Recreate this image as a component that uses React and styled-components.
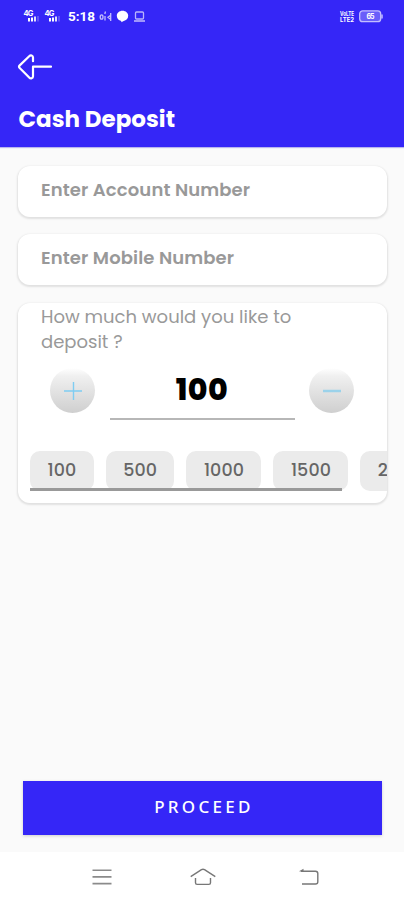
import React, { useState } from 'react'
import styled, { createGlobalStyle } from 'styled-components'

const amounts = [100, 500, 1000, 1500, 2000]

const SignalIcon = () => (
    <svg width="18" height="14" viewBox="0 0 18 14" fill="#fff">
        <text x="0.5" y="6.5" fontFamily="Inter, sans-serif" fontSize="7.5" fontWeight="700" textLength="10">4G</text>
        <rect x="5" y="9" width="2" height="3.5" />
        <rect x="8" y="8.5" width="2" height="4" />
        <rect x="11" y="7.5" width="2" height="5" opacity="0.85" />
        <rect x="14" y="7" width="2" height="5.5" opacity="0.2" />
    </svg>
)

const StatusIcons = () => (
    <svg width="48" height="14" viewBox="0 0 48 14" fill="none" stroke="#fff">
        <g strokeWidth="1.3" opacity="0.7">
            <ellipse cx="2.6" cy="8" rx="1.4" ry="2.2" />
            <path d="M6.500 2.500L5.800 5M6 7v4.500M11.700 4v8M11.700 6.300L9 8.300l2.700 2.200" />
        </g>
        <path d="M23.500 1.800c3.200 0 5.700 2.200 5.700 5s-2 4.800-4.500 5.100l-2.400 1.300v-1.300c-2.700-.5-4.500-2.400-4.500-5.100C17.800 4 20.300 1.800 23.500 1.800z" fill="#fff" stroke="none" />
        <g strokeWidth="1.3" opacity="0.65">
            <rect x="36.500" y="3" width="8" height="7" rx="1" />
            <path d="M35 12h11" strokeWidth="1.600" />
        </g>
    </svg>
)

const BatteryIcons = () => (
    <svg width="46" height="14" viewBox="0 0 46 14" fill="none" fontFamily="Inter, sans-serif" fontWeight="700">
        <text x="2" y="6.600" fill="#fff" fontSize="6" textLength="14" lengthAdjust="spacingAndGlyphs">VoLTE</text>
        <text x="2" y="12.500" fill="#fff" fontSize="6" textLength="14" lengthAdjust="spacingAndGlyphs">LTE2</text>
        <rect x="21.700" y="1.900" width="21" height="10.800" rx="3" fill="#6a5efa" stroke="#c3beff" strokeWidth="1.300" />
        <path d="M44 5.500v4" stroke="#c3beff" strokeWidth="1.500" />
        <text x="28.500" y="9.800" fill="#fff" fontSize="7" textLength="8">65</text>
    </svg>
)

const BackIcon = () => (
    <svg width="36" height="28" viewBox="0 0 36 28" fill="none" stroke="#fff" strokeWidth="2.200" strokeLinecap="round" strokeLinejoin="round">
        <path d="M34 13.700H16v9.500c0 2.200-2.300 2.900-3.800 1.300L2.700 15c-.9-.9-.9-1.700 0-2.600l9.500-9.200c1.500-1.500 3.800-.8 3.800 1.400v3.600" />
    </svg>
)

const App = () => {
    const [amount, setAmount] = useState(100)
    return (
        <>
            <GlobalStyle />
            <Screen>
                <Header>
                    <StatusBar>
                        <StatusLeft>
                            <SignalIcon />
                            <SignalIcon />
                            <Clock>5:18</Clock>
                            <StatusIcons />
                        </StatusLeft>
                        <BatteryIcons />
                    </StatusBar>
                    <BackButton aria-label="Back">
                        <BackIcon />
                    </BackButton>
                    <Title>Cash Deposit</Title>
                </Header>
                <Content>
                    <Field><span>Enter Account Number</span></Field>
                    <Field><span>Enter Mobile Number</span></Field>
                    <AmountCard>
                        <Question>How much would you like to<br />deposit ?</Question>
                        <Stepper>
                            <RoundButton aria-label="Increase" onClick={() => setAmount(amount + 100)}>
                                <svg width="20" height="20" viewBox="0 0 20 20" stroke="#7fcdf2" strokeWidth="1.400">
                                    <path d="M1 10h18M10.500 1v18" />
                                </svg>
                            </RoundButton>
                            <Amount>{amount}</Amount>
                            <RoundButton aria-label="Decrease" onClick={() => setAmount(Math.max(0, amount - 100))}>
                                <svg width="20" height="20" viewBox="0 0 20 20" stroke="#9bd2ea" strokeWidth="2.400">
                                    <path d="M1 10h18" />
                                </svg>
                            </RoundButton>
                        </Stepper>
                        <ChipRow>
                            {amounts.map(value => (
                                <Chip key={value} onClick={() => setAmount(value)}>{value}</Chip>
                            ))}
                        </ChipRow>
                        <ScrollTrack />
                    </AmountCard>
                </Content>
                <Proceed>PROCEED</Proceed>
                <NavBar>
                    <svg width="20" height="18" viewBox="0 0 20 18" stroke="#8b8b8b" strokeWidth="1.600">
                        <path d="M.5 2.200h19M.5 8.900h19M.5 15.600h19" />
                    </svg>
                    <svg width="26" height="18" viewBox="0 0 26 18" fill="none" stroke="#777" strokeWidth="1.400">
                        <path d="M.7 8.600L11.500 1.700q1.500-.9 3 0L25.300 8.600M5.500 10v4.800q0 1.600 1.600 1.600h11.800q1.600 0 1.600-1.600V10" />
                    </svg>
                    <svg width="20" height="18" viewBox="0 0 20 18" fill="none" stroke="#777" strokeWidth="1.400">
                        <path d="M2 3.200h14.500q2.300 0 2.300 2.300v8.200q0 2.300-2.300 2.300H3" />
                        <path d="M0 3.200L4.500.800V4z" fill="#777" stroke="none" />
                    </svg>
                </NavBar>
            </Screen>
        </>
    )
}

const GlobalStyle = createGlobalStyle`
    * {
        box-sizing: border-box;
    }
    body {
        margin: 0;
        background: #fafafa;
        font-family: Poppins, Inter, sans-serif;
    }
    button {
        font-family: inherit;
        border: none;
        padding: 0;
    }
    svg {
        display: block;
        flex-shrink: 0;
    }
`

const Screen = styled.div`
    display: flex;
    flex-direction: column;
    width: 404px;
    height: 900px;
    overflow: hidden;
    background: #fafafa;
`

const Header = styled.header`
    height: 147px;
    flex-shrink: 0;
    background: #3526f7;
    color: #fff;
    box-shadow: 0 1px 1px #b9b5ee;
`

const StatusBar = styled.div`
    display: flex;
    justify-content: space-between;
    height: 32px;
    padding: 9px 20px 0 23px;
`

const StatusLeft = styled.div`
    display: flex;
    gap: 3px;
`

const Clock = styled.span`
    width: 28px;
    margin: 0 0 0 3px;
    font: 700 13.5px/15px Roboto, sans-serif;
`

const BackButton = styled.button`
    display: block;
    margin: 21px 0 0 17px;
    background: none;
`

const Title = styled.h1`
    margin: 22px 0 0 18.5px;
    font-size: 23px;
    line-height: 32px;
    font-weight: 700;
    white-space: nowrap;
`

const Content = styled.main`
    display: flex;
    flex-direction: column;
    flex: 1;
    gap: 17px;
    padding: 19px 17px 0 18px;
`

const Card = styled.div`
    background: #fff;
    border-radius: 12px;
    box-shadow: 0 1px 2px 1px rgba(0, 0, 0, 0.1);
`

const Field = styled(Card)`
    height: 51px;
    padding: 11px 23px;
    color: #999;
    font-size: 18px;
    line-height: 25px;
    font-weight: 600;
    letter-spacing: 0.12px;
    white-space: nowrap;
`

const AmountCard = styled(Card)`
    height: 200px;
    margin-top: 1px;
    overflow: hidden;
`

const Question = styled.p`
    margin: 0;
    padding: 1px 0 0 23px;
    color: #999;
    font-size: 18px;
    line-height: 25px;
    white-space: nowrap;
`

const Stepper = styled.div`
    display: flex;
    justify-content: space-between;
    margin-top: 14px;
    padding: 0 33px 0 32px;
`

const RoundButton = styled.button`
    display: flex;
    align-items: center;
    justify-content: center;
    width: 45px;
    height: 45px;
    border-radius: 50%;
    background: linear-gradient(#fff 0%, #f0f0f0 18%, #cfcfcf 100%);
`

const Amount = styled.div`
    width: 185px;
    height: 52px;
    border-bottom: 2px solid #b7b7b7;
    color: #000;
    font-size: 30px;
    line-height: 43px;
    font-weight: 800;
    letter-spacing: 0.5px;
    text-align: center;
`

const ChipRow = styled.div`
    display: flex;
    gap: 12px;
    margin-top: 31px;
    padding-left: 12px;
`

const Chip = styled.button`
    flex-shrink: 0;
    height: 40px;
    padding: 0 17.3px 3px 17.5px;
    border-radius: 10px;
    background: #ebebeb;
    color: #666;
    font-size: 17.5px;
    font-weight: 500;
    letter-spacing: 0.1px;
`

const ScrollTrack = styled.div`
    position: relative;
    width: 312px;
    height: 3px;
    margin: -3px 0 0 12px;
    background: #999;
`

const Proceed = styled.button`
    flex-shrink: 0;
    width: 359px;
    height: 54px;
    margin: 0 0 17px 23px;
    padding: 0 0 3px 3px;
    background: #3526f7;
    color: #fff;
    font-family: 'Noto Sans', sans-serif;
    font-size: 17px;
    font-weight: 500;
    letter-spacing: 3.3px;
    box-shadow: 0 1px 3px rgba(0, 0, 0, 0.18);
`

const NavBar = styled.nav`
    display: flex;
    gap: 78px;
    align-items: center;
    flex-shrink: 0;
    height: 48px;
    padding: 2px 0 0 92px;
    background: #fff;

    svg:last-child {
        margin-left: 5px;
    }
`

export default App
